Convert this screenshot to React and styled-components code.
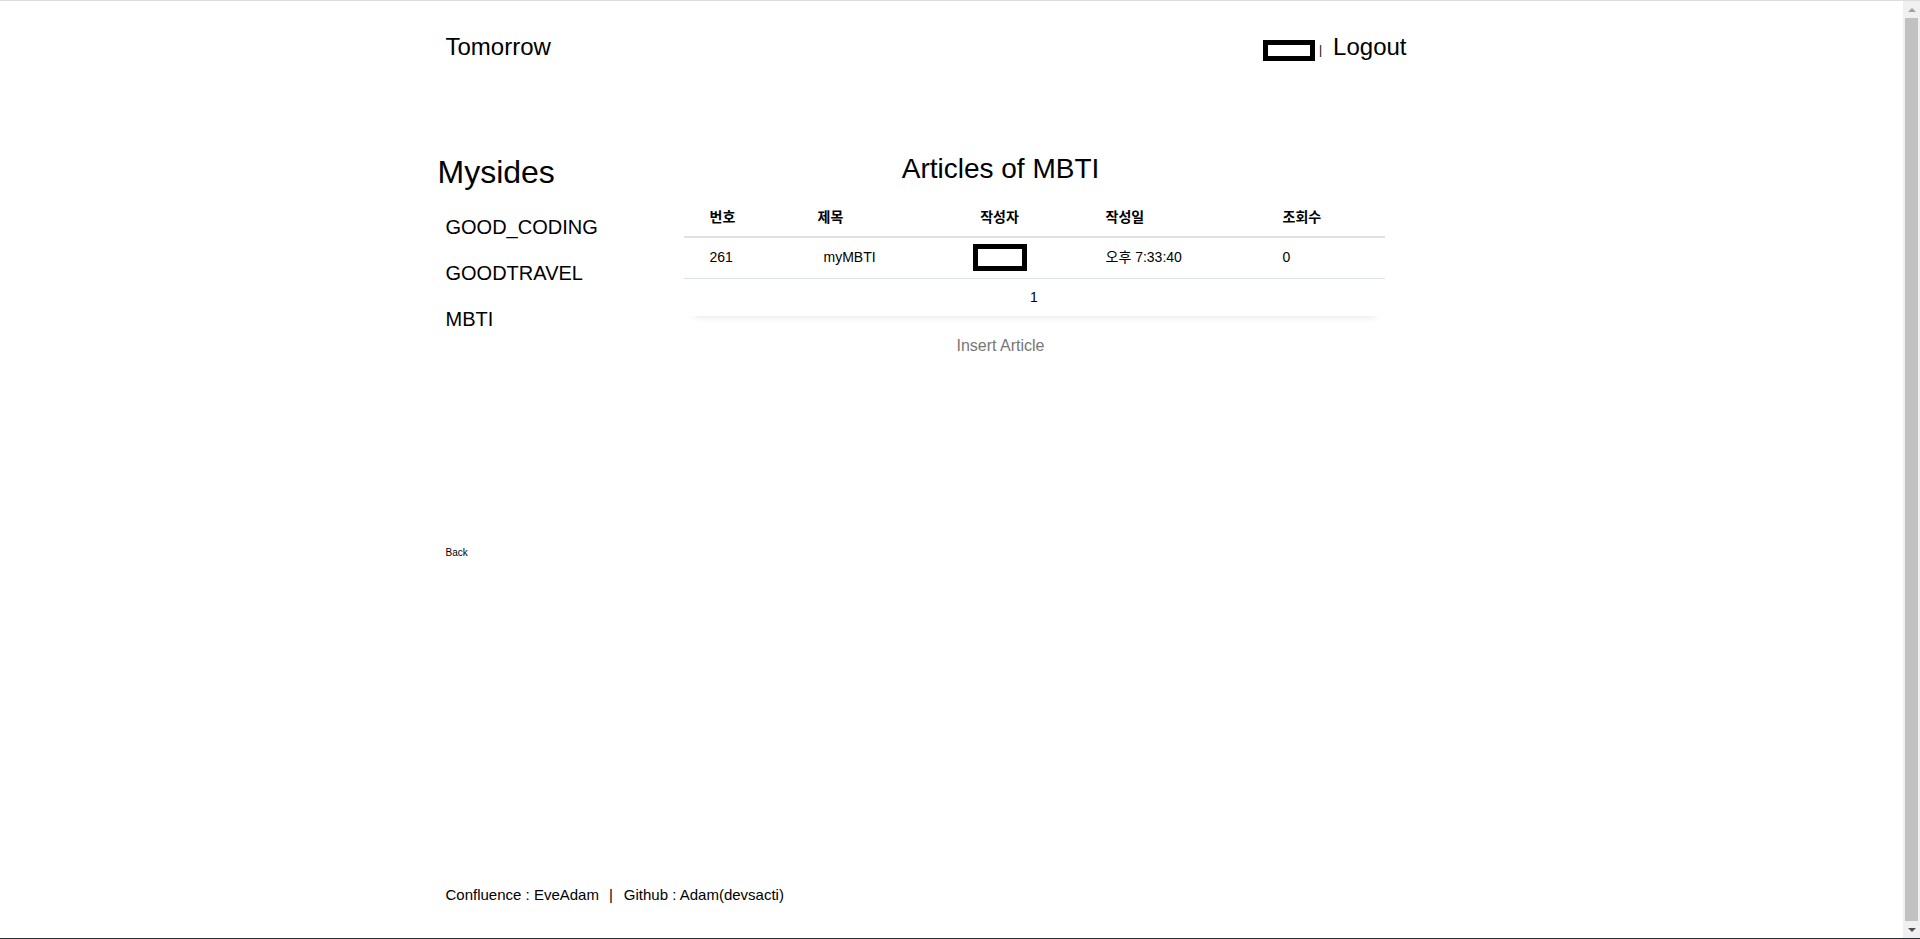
import React from 'react';
import styled, { createGlobalStyle } from 'styled-components';

const GlobalStyle = createGlobalStyle`
  html, body {
    margin: 0;
    padding: 0;
    background: #fff;
  }
  body {
    font-family: "Liberation Sans", Arial, "Noto Sans CJK KR", sans-serif;
    color: #000;
  }
`;

const Page = styled.div`
  border-top: 1px solid #dcdcdc;
  padding-right: 17px;
  min-height: 944px;
  box-sizing: border-box;
`;

/* window scrollbar + taskbar edge, drawn over the page */
const ScrollRail = styled.div`
  position: fixed;
  top: 1px;
  right: 0;
  bottom: 1px;
  width: 17px;
  background: #f0f0f0;
  display: flex;
  flex-direction: column;
  align-items: center;
`;

const Arrow = styled.span`
  flex: 0 0 17px;
  display: flex;
  align-items: center;
  justify-content: center;

  &::before {
    content: '';
    border-left: 4px solid transparent;
    border-right: 4px solid transparent;
    ${(p) =>
      p.$down
        ? `border-top: 4px solid ${p.$color};`
        : `border-bottom: 4px solid ${p.$color};`}
  }
`;

const Thumb = styled.span`
  flex: 1;
  align-self: stretch;
  margin: 0 2px;
  background: #c1c1c1;
`;

const BottomEdge = styled.div`
  position: fixed;
  left: 0;
  right: 0;
  bottom: 0;
  height: 1px;
  background: #263238;
`;

const Container = styled.div`
  width: 1024px;
  margin: 0 auto;
`;

const Header = styled.header`
  display: flex;
  justify-content: space-between;
  align-items: flex-start;
  padding: 32px 57px 0 6px;
`;

const Brand = styled.a`
  font-size: 24px;
  line-height: 28px;
  color: #000;
  text-decoration: none;
`;

const UserNav = styled.nav`
  display: flex;
  align-items: flex-start;
`;

const NameBox = styled.span`
  display: block;
  box-sizing: border-box;
  width: ${(p) => p.$w}px;
  height: ${(p) => p.$h}px;
  border: 5px solid #000;
  margin-top: ${(p) => p.$top || 0}px;
`;

const Divider = styled.span`
  font-size: 12px;
  line-height: 12px;
  margin: 11px 11px 0 4px;
`;

const NavLink = styled.a`
  font-size: 24px;
  line-height: 28px;
  color: #000;
  text-decoration: none;
`;

const Layout = styled.div`
  display: flex;
  align-items: flex-start;
  margin-top: 92px;
`;

const Sidebar = styled.aside`
  width: 244px;
  flex-shrink: 0;
  padding-top: 1px;
`;

const SideTitle = styled.h1`
  font-size: 32px;
  line-height: 37px;
  font-weight: 400;
  margin: 0 0 0 -2px;
`;

const MenuList = styled.ul`
  list-style: none;
  margin: 25px 0 0;
  padding: 0 0 0 6px;
  display: flex;
  flex-direction: column;
  gap: 23px;
`;

const MenuItem = styled.li`
  font-size: 20px;
  line-height: 23px;
`;

const Main = styled.main`
  width: 634px;
  flex-shrink: 0;
  text-align: center;
`;

const Title = styled.h2`
  font-size: 28px;
  line-height: 32px;
  font-weight: 400;
  margin: 0;
`;

const Card = styled.div`
  width: 701px;
  margin-top: 11px;
  text-align: left;
  box-shadow: 0 10px 8px -10px rgba(0, 0, 0, 0.12);
`;

const Table = styled.table`
  width: 100%;
  border-collapse: collapse;
  table-layout: fixed;
  font-size: 14px;
`;

const Th = styled.th`
  width: ${(p) => p.$w}px;
  height: 41px;
  padding: 2px 0 0 ${(p) => p.$pad || 0}px;
  text-align: ${(p) => p.$align || 'left'};
  font-weight: 700;
  line-height: 16px;
  border-bottom: 2px solid #dee2e6;
  box-sizing: border-box;
`;

const Td = styled.td`
  height: 41px;
  padding: 0 0 1px ${(p) => p.$pad || 0}px;
  text-align: ${(p) => p.$align || 'left'};
  vertical-align: middle;
  line-height: 16px;
  border-bottom: 1px solid #dee2e6;
  box-sizing: border-box;
`;

const TitleLink = styled.span`
  padding-left: 6px;
`;

const CenterBox = styled.span`
  display: inline-block;
  vertical-align: middle;
  box-sizing: border-box;
  width: 54px;
  height: 27px;
  border: 5px solid #000;
`;

const Pagination = styled.div`
  height: 36px;
  padding-top: 1px;
  line-height: 35px;
  text-align: center;
  font-size: 14px;
`;

const InsertButton = styled.a`
  display: block;
  margin-top: 21px;
  font-size: 16px;
  line-height: 18px;
  color: #777;
`;

const BackLink = styled.a`
  display: block;
  margin-top: 192px;
  padding-left: 6px;
  font-size: 10px;
  line-height: 12px;
  color: #000;
`;

const Footer = styled.footer`
  margin-top: 327px;
  padding-left: 6px;
  font-size: 15px;
  line-height: 17px;
`;

const Sep = styled.span`
  margin: 0 11px 0 10px;
`;

const columns = [
  { key: 'no', label: '번호', w: 108, pad: 26 },
  { key: 'title', label: '제목', w: 162, pad: 26 },
  { key: 'writer', label: '작성자', w: 92, align: 'center' },
  { key: 'date', label: '작성일', w: 211, pad: 60 },
  { key: 'hits', label: '조회수', w: 128, pad: 26 },
];

const articles = [
  { id: 261, title: 'myMBTI', date: '오후 7:33:40', hits: 0 },
];

const sides = ['GOOD_CODING', 'GOODTRAVEL', 'MBTI'];

const App = () => {
  const renderCell = (col, row) => {
    if (col.key === 'no') return row.id;
    if (col.key === 'title') return <TitleLink>{row.title}</TitleLink>;
    if (col.key === 'writer') return <CenterBox />;
    if (col.key === 'date') return row.date;
    return row.hits;
  };

  return (
    <Page>
      <GlobalStyle />
      <Container>
        <Header>
          <Brand>Tomorrow</Brand>
          <UserNav>
            <NameBox $w={52} $h={21} $top={7} />
            <Divider>|</Divider>
            <NavLink>Logout</NavLink>
          </UserNav>
        </Header>

        <Layout>
          <Sidebar>
            <SideTitle>Mysides</SideTitle>
            <MenuList>
              {sides.map((s) => (
                <MenuItem key={s}>{s}</MenuItem>
              ))}
            </MenuList>
          </Sidebar>

          <Main>
            <Title>Articles of MBTI</Title>
            <Card>
              <Table>
                <thead>
                  <tr>
                    {columns.map((c) => (
                      <Th key={c.key} $w={c.w} $pad={c.pad} $align={c.align}>
                        {c.label}
                      </Th>
                    ))}
                  </tr>
                </thead>
                <tbody>
                  {articles.map((a) => (
                    <tr key={a.id}>
                      {columns.map((c) => (
                        <Td key={c.key} $pad={c.pad} $align={c.align}>
                          {renderCell(c, a)}
                        </Td>
                      ))}
                    </tr>
                  ))}
                </tbody>
              </Table>
              <Pagination>1</Pagination>
            </Card>
            <InsertButton>Insert Article</InsertButton>
          </Main>
        </Layout>

        <BackLink>Back</BackLink>

        <Footer>
          Confluence : EveAdam<Sep>|</Sep>Github : Adam(devsacti)
        </Footer>
      </Container>

      <ScrollRail>
        <Arrow $color="#a3a3a3" />
        <Thumb />
        <Arrow $down $color="#505050" />
      </ScrollRail>
      <BottomEdge />
    </Page>
  );
};

export default App;
